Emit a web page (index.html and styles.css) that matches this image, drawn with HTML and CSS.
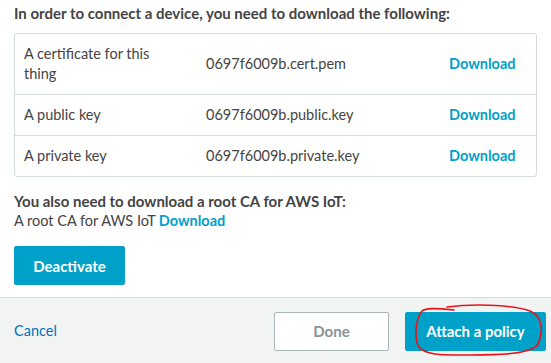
FILE: index.html
```html
<!DOCTYPE html>
<html lang="en">
<head>
    <meta charset="UTF-8">
    <meta name="viewport" content="width=device-width, initial-scale=1.0">
    <title>Certificate created</title>
    <link rel="stylesheet" href="styles.css">
</head>
<body>
    <div class="modal">
        <div class="modal-body">
            <h3 class="section-title">In order to connect a device, you need to download the following:</h3>

            <div class="files">
                <div class="file-row">
                    <div class="file-label">A certificate for this thing</div>
                    <div class="file-name">0697f6009b.cert.pem</div>
                    <a class="link" href="#">Download</a>
                </div>
                <div class="file-row">
                    <div class="file-label">A public key</div>
                    <div class="file-name">0697f6009b.public.key</div>
                    <a class="link" href="#">Download</a>
                </div>
                <div class="file-row">
                    <div class="file-label">A private key</div>
                    <div class="file-name">0697f6009b.private.key</div>
                    <a class="link" href="#">Download</a>
                </div>
            </div>

            <h3 class="section-title root-title">You also need to download a root CA for AWS IoT:</h3>
            <p class="root-line">A root CA for AWS IoT<a class="link" href="#">Download</a></p>

            <button class="btn btn-primary deactivate">Deactivate</button>
        </div>

        <div class="modal-footer">
            <a class="cancel" href="#">Cancel</a>
            <div class="footer-actions">
                <button class="btn btn-disabled">Done</button>
                <button class="btn btn-primary attach">Attach a policy</button>
            </div>
            <svg class="scribble" width="140" height="64" viewBox="0 0 140 64">
                <path d="M37 9 C 60 6, 100 6, 120 13 C 132 18, 134 32, 128 46 C 122 56, 90 57, 60 57 C 35 57, 15 58, 8 48 C 4 38, 6 20, 12 13 C 16 10, 24 10, 44 12" fill="none" stroke="#e8141b" stroke-width="1.6" stroke-linecap="round" stroke-linejoin="round"/>
            </svg>
        </div>
    </div>
</body>
</html>
```

FILE: styles.css
```css
body {
    margin: 0;
    font-family: Lato, 'Noto Sans', sans-serif;
    font-size: 14.5px;
    line-height: 20px;
    color: #16191f;
    background-color: #fff;
}
.modal {
    width: 551px;
    height: 363px;
    overflow: hidden;
}
.modal-body {
    padding: 3px 14px 12px;
    border-bottom: 1px solid #d5dbdb;
}
.section-title {
    margin: 0;
    font-size: 15px;
    line-height: 20px;
    font-weight: 700;
    color: #444;
}
.files {
    margin-top: 10px;
    width: 521px;
    border: 1px solid #d5dbdb;
    border-radius: 3px;
}
.file-row {
    display: grid;
    grid-template-columns: 182px 243px 1fr;
    align-items: center;
    padding: 10px 0 10px 9px;
    color: #444;
}
.file-row + .file-row {
    border-top: 1px solid #d5dbdb;
}
.file-label {
    width: 140px;
}
.link {
    color: #00a1c9;
    font-weight: 700;
    text-decoration: none;
}
.root-title {
    margin-top: 14px;
}
.root-line {
    margin: 0;
    color: #444;
}
.root-line .link {
    margin-left: 3px;
}
.btn {
    height: 39px;
    border-radius: 2px;
    font-family: inherit;
    font-size: 15px;
    font-weight: 700;
    cursor: pointer;
}
.btn-primary {
    background-color: #00a1c9;
    border: 1px solid #00a1c9;
    color: #fff;
}
.btn-disabled {
    width: 115px;
    background-color: #fff;
    border: 1px solid #aab7b8;
    color: #879596;
}
.deactivate {
    margin-top: 15px;
    width: 111px;
}
.modal-footer {
    position: relative;
    display: flex;
    justify-content: space-between;
    align-items: center;
    height: 66px;
    padding: 0 5px 0 14px;
    background-color: #f2f3f3;
}
.cancel {
    color: #0073bb;
    text-decoration: none;
}
.footer-actions {
    display: flex;
    gap: 16px;
}
.attach {
    width: 141px;
}
.scribble {
    position: absolute;
    left: 410px;
    top: 0;
}
```
